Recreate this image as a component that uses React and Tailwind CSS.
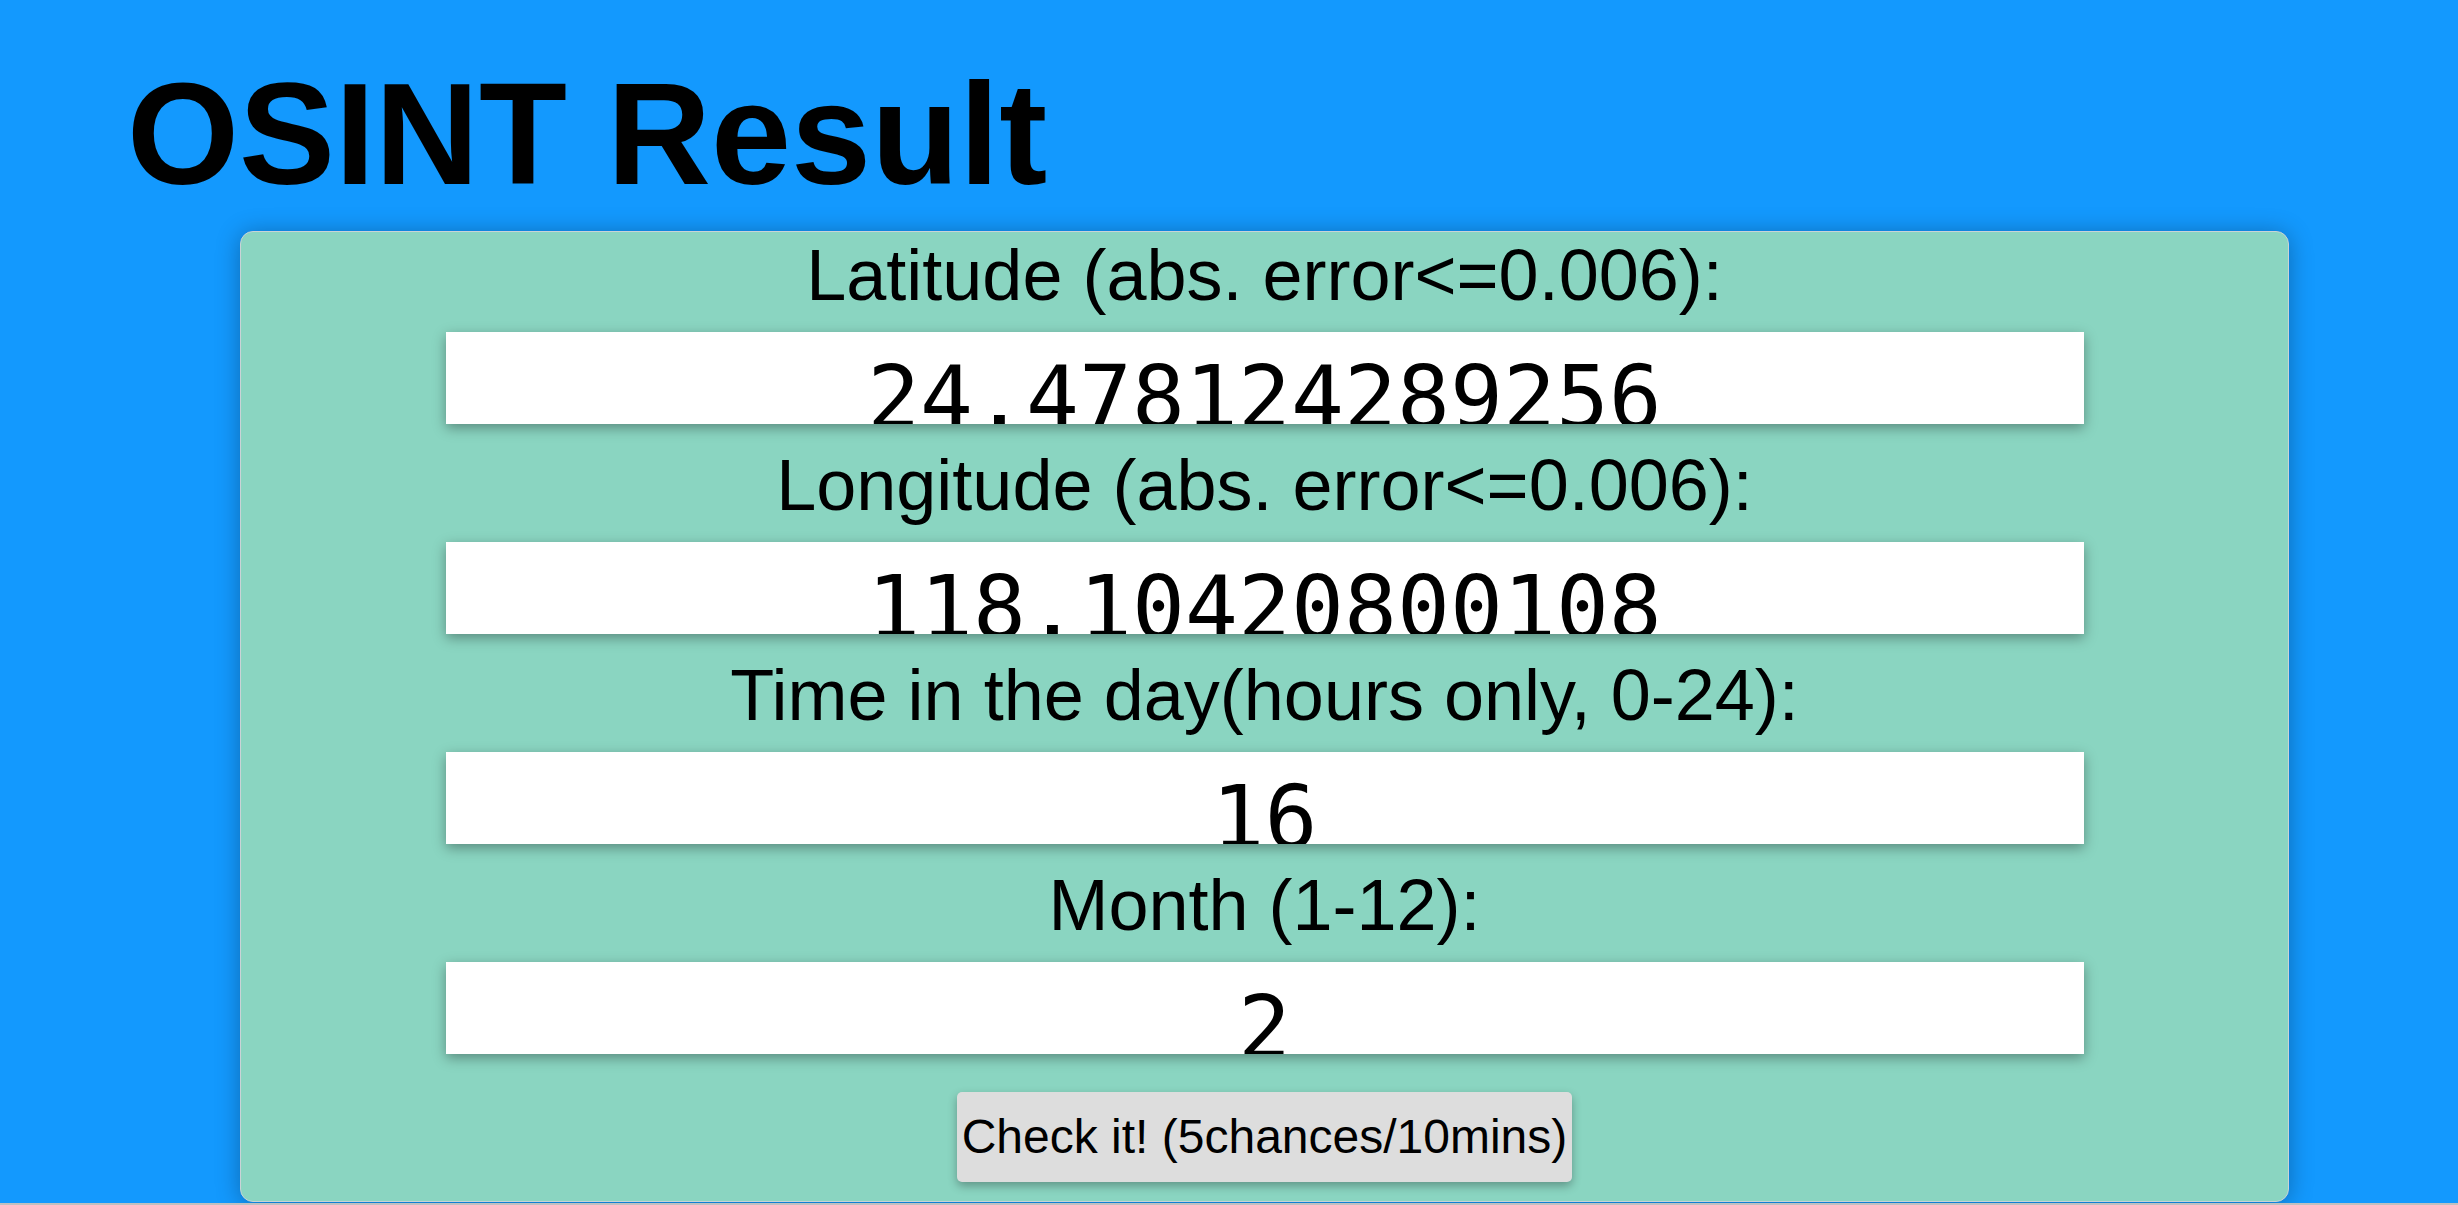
const fields = [
  { label: "Latitude (abs. error<=0.006):", value: "24.478124289256" },
  { label: "Longitude (abs. error<=0.006):", value: "118.10420800108" },
  { label: "Time in the day(hours only, 0-24):", value: "16" },
  { label: "Month (1-12):", value: "2" },
];

export default function App() {
  return (
    <div className="flex h-[1205px] flex-col overflow-hidden font-['Liberation_Sans',Arial,sans-serif] text-black">
      <main className="flex-1 bg-[#1399fe] pt-[52px]">
        <h1 className="pl-[127px] text-[144px] font-bold leading-[166px]">OSINT Result</h1>

        <section className="mt-[13px] ml-[240px] w-[2049px] rounded-[13px] border border-[#c9d3d6] bg-[#8ad5c1] pt-[2px] pb-[19px] shadow-[0_2px_24px_rgba(0,0,0,0.3)]">
          <form className="flex flex-col items-center text-center" onSubmit={(e) => e.preventDefault()}>
            {fields.map((f) => (
              <Field key={f.label} label={f.label} value={f.value} />
            ))}

            <button
              type="submit"
              className="mt-[18px] rounded-[5px] bg-[#dddddd] px-[5px] py-[17px] text-[48px] leading-[56px] shadow-[0_4px_10px_rgba(0,0,0,0.3)]"
            >
              Check it! (5chances/10mins)
            </button>
          </form>
        </section>
      </main>
      <div className="h-[2px] bg-[#c0c0c0]" />
    </div>
  );
}

const Field = ({ label, value }) => (
  <div className="flex w-full flex-col items-center">
    <label className="block text-[72px] leading-[83px]">{label}</label>
    <div className="mt-[15px] mb-[20px] h-[92px] w-[1638px] overflow-hidden bg-white shadow-[0_4px_12px_rgba(0,0,0,0.35)]">
      <div className="pt-[15px] text-center font-['DejaVu_Sans_Mono',monospace] text-[88px] leading-[102px]">
        {value}
      </div>
    </div>
  </div>
);
